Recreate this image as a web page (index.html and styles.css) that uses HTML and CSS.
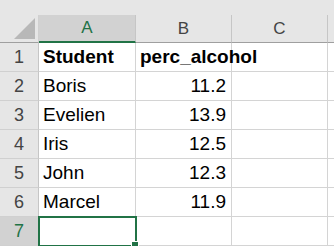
FILE: index.html
```html
<!DOCTYPE html>
<html lang="en">
<head>
    <meta charset="UTF-8">
    <title>Sheet1</title>
    <link rel="stylesheet" href="styles.css">
</head>
<body>

<div class="ribbon-gap"></div>

<div class="sheet">
    <div class="corner">
        <svg width="22" height="22" viewBox="0 0 22 22"><polygon points="21,0 21,21 0,21" fill="#b8b8b8"/></svg>
    </div>
    <div class="col-head active">A</div>
    <div class="col-head">B</div>
    <div class="col-head">C</div>
    <div class="col-head rest"></div>

    <div class="row-head">1</div>
    <div class="cell bold">Student</div>
    <div class="cell bold">perc_alcohol</div>
    <div class="cell"></div>
    <div class="cell rest"></div>

    <div class="row-head">2</div>
    <div class="cell">Boris</div>
    <div class="cell num">11.2</div>
    <div class="cell"></div>
    <div class="cell rest"></div>

    <div class="row-head">3</div>
    <div class="cell">Evelien</div>
    <div class="cell num">13.9</div>
    <div class="cell"></div>
    <div class="cell rest"></div>

    <div class="row-head">4</div>
    <div class="cell">Iris</div>
    <div class="cell num">12.5</div>
    <div class="cell"></div>
    <div class="cell rest"></div>

    <div class="row-head">5</div>
    <div class="cell">John</div>
    <div class="cell num">12.3</div>
    <div class="cell"></div>
    <div class="cell rest"></div>

    <div class="row-head">6</div>
    <div class="cell">Marcel</div>
    <div class="cell num">11.9</div>
    <div class="cell"></div>
    <div class="cell rest"></div>

    <div class="row-head active">7</div>
    <div class="cell selected"></div>
    <div class="cell"></div>
    <div class="cell"></div>
    <div class="cell rest"></div>
</div>

</body>
</html>
```

FILE: styles.css
```css
body {
    margin: 0;
    background: #ffffff;
    font-family: "Liberation Sans", Arial, sans-serif;
    overflow: hidden;
}
.ribbon-gap {
    height: 15px;
    background: #e6e6e6;
}
.sheet {
    display: grid;
    grid-template-columns: 39px 97px 96px 96px 1fr;
    grid-template-rows: 28px repeat(7, 29px);
}
.corner {
    background: #e6e6e6;
    border-right: 1px solid #d0d0d0;
    border-bottom: 1px solid #9f9f9f;
    display: flex;
    align-items: flex-end;
    justify-content: flex-end;
    padding: 0 2px 2px 0;
}
.col-head {
    background: #e6e6e6;
    border-right: 1px solid #c6c6c6;
    border-bottom: 1px solid #9f9f9f;
    color: #444444;
    font-size: 17px;
    line-height: 27px;
    text-align: center;
}
.col-head.active {
    background: #d2d2d2;
    color: #217346;
    border-bottom: 2px solid #217346;
    line-height: 26px;
}
.col-head.rest {
    border-right: none;
}
.row-head {
    background: #e6e6e6;
    border-right: 1px solid #c6c6c6;
    border-bottom: 1px solid #d0d0d0;
    color: #444444;
    font-size: 18px;
    line-height: 28px;
    text-align: center;
}
.row-head.active {
    background: #d2d2d2;
    color: #217346;
}
.cell {
    border-right: 1px solid #d4d4d4;
    border-bottom: 1px solid #d4d4d4;
    color: #000000;
    font-size: 19px;
    line-height: 28px;
    padding: 0 4px;
    white-space: nowrap;
    position: relative;
}
.cell.rest {
    border-right: none;
}
.bold {
    font-weight: bold;
}
.num {
    text-align: right;
    padding-right: 5px;
}
.selected::after {
    content: "";
    position: absolute;
    top: -1px;
    left: -1px;
    right: -2px;
    bottom: -2px;
    border: 2px solid #217346;
}
.selected::before {
    content: "";
    position: absolute;
    right: -4px;
    bottom: -4px;
    width: 6px;
    height: 6px;
    background: #217346;
    border: 1px solid #ffffff;
    z-index: 1;
}
```
